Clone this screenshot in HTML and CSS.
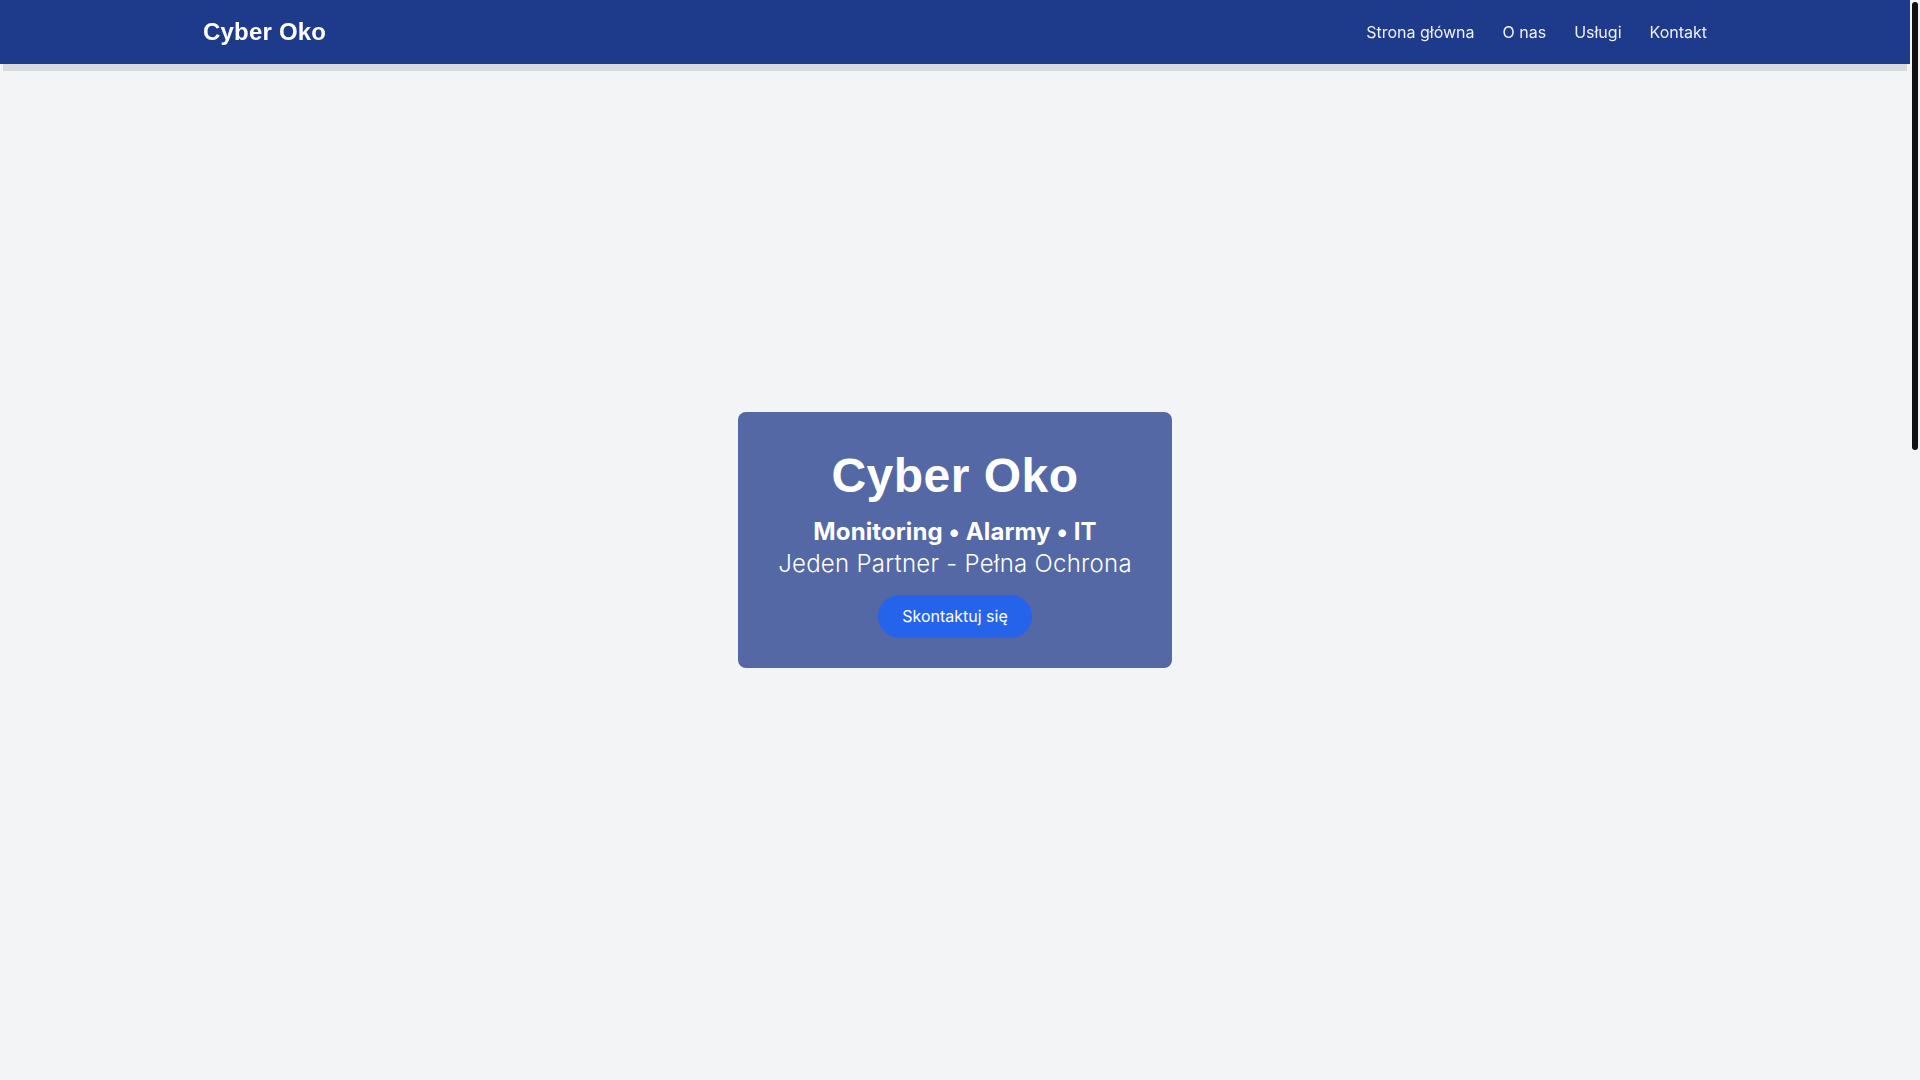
FILE: index.html
```html
<!DOCTYPE html>
<html lang="pl">
<head>
<meta charset="utf-8">
<title>Cyber Oko</title>
<link rel="stylesheet" href="styles.css">
</head>
<body>
<nav class="navbar">
  <div class="nav-inner">
    <a class="logo" href="#">Cyber Oko</a>
    <ul class="nav-links">
      <li><a href="#">Strona główna</a></li>
      <li><a href="#">O nas</a></li>
      <li><a href="#">Usługi</a></li>
      <li><a href="#">Kontakt</a></li>
    </ul>
  </div>
</nav>
<main>
  <section class="hero">
    <div class="hero-card">
      <h1 class="hero-title">Cyber Oko</h1>
      <p class="hero-sub">Monitoring • Alarmy • IT</p>
      <p class="hero-tag">Jeden Partner - Pełna Ochrona</p>
      <a class="hero-btn" href="#">Skontaktuj się</a>
    </div>
  </section>
  <section class="below"></section>
</main>
<div class="fake-scrollbar" aria-hidden="true"><div class="fake-thumb"></div></div>
</body>
</html>
```
FILE: styles.css
```css
html {
  background: #f3f4f6;
}
body {
  margin: 0;
  padding-right: 10px;
  background: #f3f4f6;
  font-family: "Inter", "Noto Sans", sans-serif;
  color: #111827;
}
.navbar {
  position: fixed;
  top: 0;
  left: 0;
  right: 10px;
  height: 64px;
  background: #1e3a8a;
  box-shadow: 0 10px 0 -3px #d9dadd;
  z-index: 10;
}
.nav-inner {
  max-width: 1536px;
  margin: 0 auto;
  padding: 0 16px;
  height: 64px;
  box-sizing: border-box;
  display: flex;
  align-items: center;
  justify-content: space-between;
}
.logo {
  font-family: "Liberation Sans", Arial, sans-serif;
  font-weight: 700;
  font-size: 24px;
  line-height: 32px;
  letter-spacing: 0.2px;
  color: #ffffff;
  text-decoration: none;
}
.nav-links {
  list-style: none;
  margin: 0;
  padding: 0;
  display: flex;
  gap: 28px;
}
.nav-links a {
  color: #eef0f6;
  text-decoration: none;
  font-size: 16px;
  line-height: 24px;
}
.hero {
  height: 100vh;
  display: flex;
  align-items: center;
  justify-content: center;
}
.hero-card {
  background: rgba(30, 58, 138, 0.75);
  border-radius: 8px;
  padding: 32px 40px 30px;
  text-align: center;
  color: #ffffff;
}
.hero-title {
  margin: 0 0 8px;
  font-family: "Liberation Sans", Arial, sans-serif;
  font-weight: 700;
  font-size: 48px;
  line-height: 64px;
  letter-spacing: 0.5px;
}
.hero-sub {
  margin: 0;
  font-weight: 700;
  font-size: 24px;
  line-height: 32px;
  letter-spacing: 0.1px;
}
.hero-tag {
  margin: 0 0 15px;
  font-weight: 300;
  font-size: 24px;
  line-height: 32px;
  letter-spacing: 0.26px;
}
.hero-btn {
  display: inline-block;
  background: #2563eb;
  color: #ffffff;
  text-decoration: none;
  font-size: 16px;
  line-height: 23px;
  padding: 10px 24px;
  border-radius: 9999px;
}
.below {
  height: 1500px;
}
.fake-scrollbar {
  position: fixed;
  top: 0;
  right: 0;
  width: 10px;
  height: 100vh;
  background: #f3f4f6;
  z-index: 20;
}
.fake-thumb {
  margin: 2px 0 0 2px;
  width: 6px;
  height: 448px;
  border-radius: 3px;
  background: #111111;
}
```
